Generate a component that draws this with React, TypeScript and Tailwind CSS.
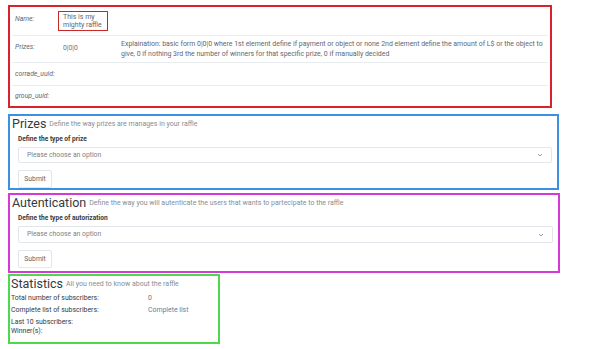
const FONT = "font-['Roboto','Liberation_Sans',sans-serif]";

function Chevron() {
  return (
    <svg width="6" height="4" viewBox="0 0 8 6" className="text-[#868e96]" aria-hidden>
      <path d="M1 1.5l3 3 3-3" fill="none" stroke="currentColor" strokeWidth="1.3" />
    </svg>
  );
}

function SelectBox({ label, h }: { label: string; h: string }) {
  return (
    <div className="flex flex-col pl-[8px] pr-[5px]">
      <div className="h-[8px] text-[6.6px] font-bold leading-[8px] text-[#343a40]">{label}</div>
      <div
        className={`mt-[4px] flex ${h} items-center justify-between rounded-[2px] border border-[#e3e6ea] px-[8px] text-[6.8px] text-[#7a828a]`}
      >
        <span>Please choose an option</span>
        <Chevron />
      </div>
      <button
        type="button"
        className="mt-[7px] flex h-[18px] w-[34px] items-center justify-center rounded-[2px] border border-[#e3e6ea] bg-white text-[6.8px] text-[#5f666d]"
      >
        Submit
      </button>
    </div>
  );
}

function Section({
  title,
  subtitle,
  label,
  border,
  width,
  height,
  selectH,
}: {
  title: string;
  subtitle: string;
  label: string;
  border: string;
  width: string;
  height: string;
  selectH: string;
}) {
  return (
    <div className={`flex flex-col border-2 ${border} ${width} ${height}`}>
      <div className="flex h-[14px] items-end gap-[3px] pl-[2px] leading-[13px]">
        <span className="text-[12.5px] text-[#343a40]">{title}</span>
        <span className="pb-[1px] text-[7px] leading-[10px] text-[#868e96]">{subtitle}</span>
      </div>
      <div className="mt-[5px]">
        <SelectBox label={label} h={selectH} />
      </div>
    </div>
  );
}

export default function App() {
  return (
    <div className={`${FONT} h-[349px] w-[600px] bg-white pl-[8px] pt-[5px] text-[#495057]`}>
      {/* raffle details */}
      <div className="flex h-[103px] w-[544px] flex-col border-2 border-[#d7232b] px-[2px] pt-[2px]">
        <div className="flex h-[27px] border-b border-[#e9ecef] pl-[3px]">
          <div className="w-[43px] pt-[5px] text-[6.8px] italic text-[#5f666d]">Name:</div>
          <div className="mt-[2px] h-[20px] w-[50px] border-[1.5px] border-[#c62828] px-[4px] pt-[1px] text-[7px] leading-[8px] text-[#5f666d]">
            This is my
            <br />
            mighty raffle
          </div>
        </div>
        <div className="flex h-[27px] border-b border-[#e9ecef] pl-[3px] text-[6.8px]">
          <div className="w-[43px] shrink-0 pt-[6px] italic text-[#5f666d]">Prizes:</div>
          <div className="w-[63px] shrink-0 pl-[5px] pt-[7px] text-[#6c757d]">0|0|0</div>
          <div className="whitespace-nowrap pt-[4px] text-[6.95px] leading-[9.5px] text-[#5f666d]">
            Explaination: basic form 0|0|0 where 1st element define if payment or object or none 2nd element define the amount of L$ or the object to
            <br />
            give, 0 if nothing 3rd the number of winners for that specific prize, 0 if manually decided
          </div>
        </div>
        <div className="flex h-[23px] border-b border-[#e9ecef] pl-[3px] pt-[6px] text-[6.8px] italic text-[#5f666d]">
          corrade_uuid:
        </div>
        <div className="flex h-[20px] pl-[3px] pt-[5px] text-[6.8px] italic text-[#5f666d]">group_uuid:</div>
      </div>

      <div className="mt-[6px]">
        <Section
          title="Prizes"
          subtitle="Define the way prizes are manages in your raffle"
          label="Define the type of prize"
          border="border-[#3d8fe0]"
          width="w-[551px]"
          height="h-[76px]"
          selectH="h-[16px]"
        />
      </div>

      <div className="mt-[3px]">
        <Section
          title="Autentication"
          subtitle="Define the way you will autenticate the users that wants to partecipate to the raffle"
          label="Define the type of autorization"
          border="border-[#d63ad6]"
          width="w-[552px]"
          height="h-[80px]"
          selectH="h-[17px]"
        />
      </div>

      {/* statistics */}
      <div className="mt-[1px] flex h-[70px] w-[212px] flex-col border-2 border-[#4cd94c] pl-[1px]">
        <div className="flex h-[14px] items-end gap-[3px] leading-[13px]">
          <span className="text-[12.5px] text-[#343a40]">Statistics</span>
          <span className="pb-[1px] text-[7px] leading-[10px] text-[#868e96]">All you need to know about the raffle</span>
        </div>
        <div className="mt-[2px] grid grid-cols-[137px_1fr] text-[6.9px] leading-[8px] text-[#343a40]">
          <div className="py-[2px]">Total number of subscribers:</div>
          <div className="py-[2px] text-[#6c757d]">0</div>
          <div className="py-[2px]">Complete list of subscribers:</div>
          <div className="py-[2px] text-[#5b7fa6]">Complete list</div>
          <div className="pt-[2px]">Last 10 subscribers:</div>
          <div />
          <div className="pt-[1px]">Winner(s):</div>
          <div />
        </div>
      </div>
    </div>
  );
}
